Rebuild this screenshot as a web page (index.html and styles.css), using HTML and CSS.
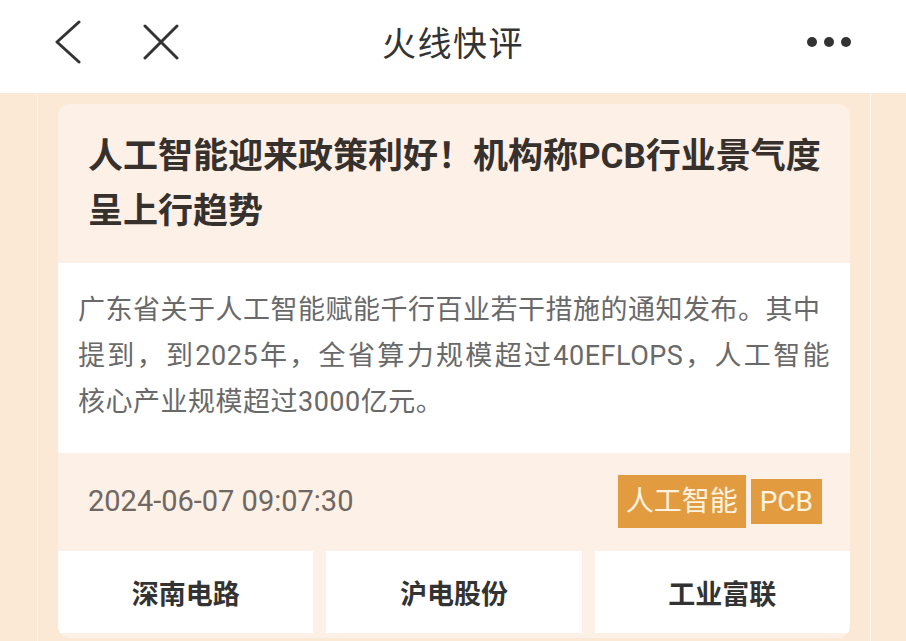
FILE: index.html
```html
<!DOCTYPE html>
<html lang="zh-CN">
<head>
  <meta charset="UTF-8">
  <title>火线快评</title>
  <meta name="viewport" content="width=device-width, initial-scale=1.0">
  <link rel="stylesheet" href="styles.css">
</head>
<body>

  <header class="topbar">
    <div class="topbar-left">
      <svg class="icon" width="30" height="44" viewBox="0 0 30 44">
        <polyline points="26,2 4,22 26,42" fill="none" stroke="#333" stroke-width="3" stroke-linecap="round" stroke-linejoin="round"/>
      </svg>
      <svg class="icon close" width="36" height="36" viewBox="0 0 36 36">
        <line x1="2" y1="2" x2="34" y2="34" stroke="#333" stroke-width="3" stroke-linecap="round"/>
        <line x1="34" y1="2" x2="2" y2="34" stroke="#333" stroke-width="3" stroke-linecap="round"/>
      </svg>
    </div>
    <div class="topbar-title">火线快评</div>
    <div class="topbar-right">
      <span class="dot"></span><span class="dot"></span><span class="dot"></span>
    </div>
  </header>

  <main class="page">
    <div class="card">
      <div class="card-head">
        <h1>人工智能迎来政策利好！机构称PCB行业景气度呈上行趋势</h1>
      </div>
      <div class="card-body">
        <p class="summary"><span class="stretch">广东省关于人工智能赋能千行百业若干措施的通知发布。其中提到，到2025年，全省算力规模超过40EFLOPS，人工智能</span>核心产业规模超过3000亿元。</p>
      </div>
      <div class="card-foot">
        <span class="date">2024-06-07 09:07:30</span>
        <div class="tags">
          <span class="tag big">人工智能</span>
          <span class="tag">PCB</span>
        </div>
      </div>
      <div class="stocks">
        <div class="stock">深南电路</div>
        <div class="stock">沪电股份</div>
        <div class="stock">工业富联</div>
      </div>
    </div>
  </main>

</body>
</html>
```

FILE: styles.css
```css
html, body {
  margin: 0;
  padding: 0;
  height: 100%;
  overflow: hidden;
}

body {
  background-color: #fbe8d5;
  font-family: Roboto, "Noto Sans CJK SC", sans-serif;
  color: #333;
}

/* Kopfzeile */
.topbar {
  height: 93px;
  box-sizing: border-box;
  padding-bottom: 10px;
  background-color: #fff;
  display: grid;
  grid-template-columns: 1fr auto 1fr;
  align-items: center;
}

.topbar-left {
  display: flex;
  align-items: center;
  gap: 60px;
  padding-left: 53px;
}

.icon {
  display: block;
}

.topbar-title {
  font-size: 34px;
  color: #333;
  letter-spacing: 1.5px;
}

.topbar-right {
  display: flex;
  justify-content: flex-end;
  gap: 7px;
  padding-right: 55px;
}

.dot {
  width: 10px;
  height: 10px;
  border-radius: 50%;
  background-color: #333;
}

/* Inhalt */
.page {
  margin-left: 37px;
  width: 834px;
  height: calc(100% - 93px);
  box-sizing: border-box;
  padding: 11px 20px 0;
  border-left: 1px solid rgba(255, 255, 255, 0.7);
  border-right: 1px solid rgba(255, 255, 255, 0.7);
}

.card {
  background-color: #fdf0e7;
  border-radius: 12px;
  overflow: hidden;
  padding-bottom: 5px;
}

.card-head {
  padding: 25px 18px 24px 30px;
}

h1 {
  margin: 0;
  font-size: 35px;
  line-height: 55px;
  font-weight: bold;
  color: #36312d;
}

.card-body {
  background-color: #fff;
  padding: 24px 20px 28px;
}

.summary {
  margin: 0;
  font-size: 27px;
  letter-spacing: 0.5px;
  line-height: 46px;
  color: #696969;
}

.summary .stretch {
  display: block;
  text-align-last: justify;
}

.card-foot {
  height: 98px;
  display: flex;
  align-items: center;
  justify-content: space-between;
  padding: 0 28px 2px 30px;
  box-sizing: border-box;
}

.date {
  font-size: 29px;
  color: #6f6862;
}

.tags {
  display: flex;
  align-items: center;
  gap: 5px;
}

.tag {
  background-color: #e29b3f;
  color: #fdf3e0;
  font-size: 28px;
  line-height: 45px;
  padding: 0 9px;
}

.tag.big {
  line-height: 53px;
  padding: 0 8px;
}

.stocks {
  display: grid;
  grid-template-columns: repeat(3, 1fr);
  gap: 13px;
}

.stock {
  background-color: #fff;
  height: 82px;
  display: flex;
  align-items: center;
  justify-content: center;
  font-size: 27px;
  font-weight: bold;
  color: #333;
}
```
